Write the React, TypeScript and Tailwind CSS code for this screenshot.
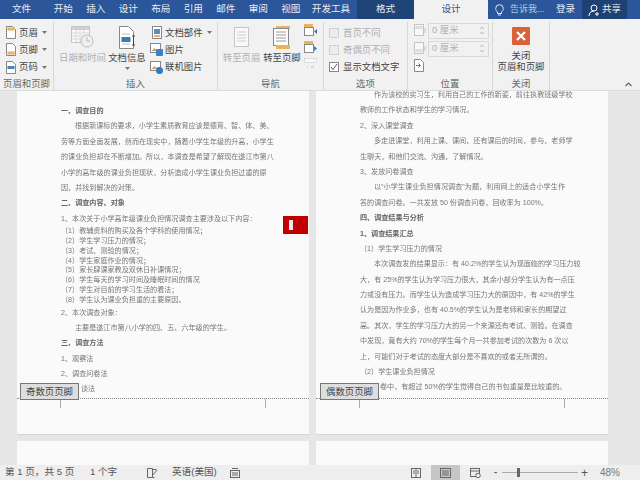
import React from "react";

const FONT = "font-['Liberation_Sans','Noto_Sans_CJK_SC',sans-serif]";

function Caret({ className = "" }: { className?: string }) {
  return <svg width="5" height="3" viewBox="0 0 5 3" className={className}><path d="M0 0h5L2.5 3z" fill="#777" /></svg>;
}

function DocIcon({ band, bandY = 8 }: { band: string; bandY?: number }) {
  return (
    <svg width="10" height="13" viewBox="0 0 10 13">
      <path d="M.5.5h6l3 3v9h-9z" fill="#fff" stroke="#888" />
      <rect x="1.5" y={bandY} width="7" height="3" fill={band} />
    </svg>
  );
}

function SmallPic({ color }: { color: string }) {
  return (
    <svg width="13" height="13" viewBox="0 0 13 13">
      <rect x=".5" y=".5" width="10" height="9" fill="#fff" stroke="#888" />
      <path d="M1.500 8l3-3 2 2 1-1 2 2z" fill="#c9a36a" />
      <rect x="6" y="6" width="7" height="7" rx={color === "#2b7cc4" ? 3.5 : 1} fill={color} />
    </svg>
  );
}

function Group({ w, label, children, last = false, className = "" }: { w: string; label: string; children: React.ReactNode; last?: boolean; className?: string }) {
  return (
    <div className={`${w} h-[69px] mt-[3px] shrink-0 flex flex-col ${last ? "" : "border-r border-[#d8d8d8]"}`}>
      <div className={`flex-1 min-h-0 flex ${className}`}>{children}</div>
      <div className="h-[15px] leading-[15px] text-center text-[9.4px] text-[#666]">{label}</div>
    </div>
  );
}

function BigBtn({ text, w, dim = false, icon, caret = false }: { text: string; w: string; dim?: boolean; icon: React.ReactNode; caret?: boolean }) {
  return (
    <div className={`${w} flex flex-col items-center pt-[3px] ${dim ? "text-[#b0b0b0]" : "text-[#444]"}`}>
      <div className="h-[24px] flex items-center">{icon}</div>
      <div className="text-[9.4px] leading-[11px] whitespace-nowrap mt-[3px]">{text}</div>
      {caret && <Caret className="mt-[4px]" />}
    </div>
  );
}

function Row({ icon, text, caret = false }: { icon: React.ReactNode; text: string; caret?: boolean }) {
  return (
    <div className="h-[17.5px] flex items-center text-[9.4px] whitespace-nowrap text-[#444]">
      <div className="w-[13px] flex justify-center shrink-0">{icon}</div>
      <span className="ml-[2px]">{text}</span>
      {caret && <Caret className="ml-[4px]" />}
    </div>
  );
}

function Check({ text, checked = false }: { text: string; checked?: boolean }) {
  return (
    <div className={`h-[17.5px] flex items-center text-[9.4px] whitespace-nowrap ${checked ? "text-[#444]" : "text-[#b0b0b0]"}`}>
      <div className={`w-[10px] h-[10px] border ${checked ? "border-[#888] bg-white" : "border-[#d0d0d0] bg-[#ececec]"} flex items-center justify-center`}>
        {checked && <svg width="8" height="8" viewBox="0 0 8 8"><path d="M1 4l2 2.5L7 1" fill="none" stroke="#555" /></svg>}
      </div>
      <span className="ml-[4px]">{text}</span>
    </div>
  );
}

function Spin({ top = false }: { top?: boolean }) {
  return (
    <div className="h-[17px] flex items-center">
      <svg width="14" height="13" viewBox="0 0 14 13" className="opacity-50 shrink-0">
        <rect x=".5" y=".5" width="9" height="11" fill="#fff" stroke="#999" />
        <rect x="1.5" y={top ? 2 : 7} width="7" height="3" fill="#ccc" />
        <path d="M11 4v5" stroke="#999" />
      </svg>
      <div className="w-[61px] h-[16px] border border-[#d8d8d8] flex items-center justify-between pl-[3px] pr-[4px] text-[9.4px] text-[#b0b0b0]">
        <span>0 厘米</span>
        <svg width="4" height="9" viewBox="0 0 4 9"><path d="M0 3l2-2 2 2M0 6l2 2 2-2" fill="none" stroke="#bbb" /></svg>
      </div>
    </div>
  );
}

const BAND = "#e9b35f";

function Ribbon() {
  return (
    <div className="h-[72px] bg-[#f1f1f1] flex items-start relative border-b border-[#dcdcdc]">
      <Group w="w-[54px]" label="页眉和页脚" className="flex-col pl-[4px] pt-[2px]">
        <Row icon={<DocIcon band={BAND} bandY={1.5} />} text="页眉" caret />
        <Row icon={<DocIcon band={BAND} bandY={8.5} />} text="页脚" caret />
        <Row icon={<DocIcon band="#4a7fc1" bandY={5} />} text="页码" caret />
      </Group>
      <Group w="w-[164px]" label="插入" className="pl-[5px]">
        <BigBtn
          w="w-[47px]"
          text="日期和时间"
          dim
          icon={
            <svg width="23" height="22" viewBox="0 0 23 22" className="opacity-60">
              <rect x=".5" y=".5" width="18" height="16" fill="#fff" stroke="#aaa" />
              <rect x="1" y="1" width="17" height="3" fill="#bbb" />
              <path d="M1 7h17M1 10h17M1 13h17M5 4v12M9 4v12M13 4v12" stroke="#ccc" />
              <circle cx="16" cy="15" r="6" fill="#eee" stroke="#999" />
              <path d="M16 11v4h3" fill="none" stroke="#999" />
            </svg>
          }
        />
        <div className="w-[2px]" />
        <BigBtn
          w="w-[38px]"
          text="文档信息"
          caret
          icon={
            <svg width="17" height="23" viewBox="0 0 17 23">
              <path d="M.5.5h9l5 5v17H.5z" fill="#fff" stroke="#888" />
              <rect x="2.500" y="11" width="9" height="5" fill="#3f76b8" />
              <path d="M3 8h8M3 18h8" stroke="#bbb" />
              <path d="M14.500 10v9M13 10h3M13 19h3" stroke="#444" fill="none" />
            </svg>
          }
        />
        <div className="flex flex-col pl-[4px] pt-[2px]">
          <Row icon={<svg width="10" height="13" viewBox="0 0 10 13"><rect x=".5" y=".5" width="9" height="12" fill="#fff" stroke="#888" /><rect x="2" y="3" width="6" height="5" fill="#5b8cc4" /><rect x="2" y="9" width="6" height="2" fill={BAND} /></svg>} text="文档部件" caret />
          <Row icon={<SmallPic color="#3f7fc4" />} text="图片" />
          <Row icon={<SmallPic color="#2b7cc4" />} text="联机图片" />
        </div>
      </Group>
      <Group w="w-[106px]" label="导航" className="pl-[5px]">
        <BigBtn
          w="w-[37px]"
          text="转至页眉"
          dim
          icon={
            <svg width="15" height="20" viewBox="0 0 15 20" className="opacity-60">
              <rect x=".5" y=".5" width="14" height="19" fill="#fff" stroke="#aaa" />
              <path d="M3 5h9M3 8h9M3 11h9M3 14h9" stroke="#bbb" />
            </svg>
          }
        />
        <div className="w-[2px]" />
        <BigBtn
          w="w-[40px]"
          text="转至页脚"
          icon={
            <svg width="18" height="23" viewBox="0 0 18 23">
              <rect x="3" y="0" width="14" height="3" fill={BAND} />
              <rect x=".5" y="2.500" width="15" height="17" fill="#fff" stroke="#888" />
              <path d="M3 6h10M3 9h10M3 12h10M3 15h10" stroke="#999" />
              <rect x="3" y="19" width="14" height="4" fill={BAND} />
            </svg>
          }
        />
        <div className="flex flex-col pl-[2px] pt-[2px] gap-[5px]">
          <svg width="13" height="12" viewBox="0 0 13 12"><rect x=".5" y="3.500" width="9" height="8" fill="#fff" stroke="#888" /><rect x="0" y="0" width="9" height="3" fill={BAND} /><path d="M13 5v5l-3-2.500z" fill="#3f76b8" /></svg>
          <svg width="13" height="12" viewBox="0 0 13 12"><rect x=".5" y="3.500" width="9" height="8" fill="#fff" stroke="#888" /><rect x="0" y="0" width="9" height="3" fill={BAND} /><path d="M10 5v5l3-2.500z" fill="#3f76b8" /></svg>
          <svg width="13" height="12" viewBox="0 0 13 12" className="opacity-50"><rect x=".5" y=".5" width="12" height="4" fill="#fff" stroke="#aaa" strokeDasharray="2 1" /><path d="M3 9h1M7 9h3" stroke="#888" /></svg>
        </div>
      </Group>
      <Group w="w-[84px]" label="选项" className="flex-col pl-[5px] pt-[2px]">
        <Check text="首页不同" />
        <Check text="奇偶页不同" />
        <Check text="显示文档文字" checked />
      </Group>
      <Group w="w-[85px]" label="位置" className="flex-col pl-[6px]">
        <Spin top />
        <div className="h-[1px]" />
        <Spin />
        <div className="mt-[2px]">
          <svg width="10" height="13" viewBox="0 0 10 13"><path d="M.5.5h6l3 3v9h-9z" fill="#fff" stroke="#888" /><path d="M2 6.500h4M4.500 4.500l2 2-2 2" stroke="#3f76b8" fill="none" /></svg>
        </div>
      </Group>
      <Group w="w-[57px]" label="关闭" className="flex-col items-center pt-[5px]">
        <div className="w-[18px] h-[18px] bg-[#d9623a] rounded-[1px] flex items-center justify-center">
          <svg width="10" height="10" viewBox="0 0 10 10"><path d="M1 1l8 8M9 1L1 9" stroke="#fff" strokeWidth="2.2" /></svg>
        </div>
        <div className="text-[9.4px] leading-[11px] text-[#444] text-center mt-[5px] whitespace-nowrap">关闭<br />页眉和页脚</div>
      </Group>
      <div className="absolute right-[8px] bottom-[3px]">
        <svg width="7" height="5" viewBox="0 0 7 5"><path d="M.5 4l3-3 3 3" fill="none" stroke="#666" strokeWidth="1.2" /></svg>
      </div>
    </div>
  );
}

function Tabs() {
  const tabs = ["开始", "插入", "设计", "布局", "引用", "邮件", "审阅", "视图"];
  return (
    <div className="h-[19px] bg-[#2b579a] flex items-stretch text-[9.6px] text-[#e8edf5] whitespace-nowrap">
      <div className="w-[43px] mr-[4px] flex items-center justify-center">文件</div>
      {tabs.map((t) => (
        <div key={t} className="w-[32.5px] flex items-center justify-center">{t}</div>
      ))}
      <div className="w-[48px] mr-[2px] flex items-center justify-center">开发工具</div>
      <div className="w-[57px] bg-[#1f4478] flex items-center justify-center">格式</div>
      <div className="w-[74px] bg-[#f1f1f1] text-[#2b579a] flex items-center justify-center">设计</div>
      <div className="w-[68px] flex items-center pl-[7px]">
        <svg width="9" height="12" viewBox="0 0 9 12"><path d="M2.500 8C1.500 7 .7 6 .7 4.500a3.800 3.800 0 0 1 7.600 0C8.300 6 7.500 7 6.500 8v1.500h-4zM3 11h3" fill="none" stroke="#dfe6f0" /></svg>
        <span className="ml-[6px] text-[#b7c7de] text-[9px]">告诉我...</span>
      </div>
      <div className="w-[26px] flex items-center">登录</div>
      <div className="w-[45px] bg-[#1e4173] flex items-center pl-[6px]">
        <svg width="12" height="12" viewBox="0 0 12 12"><circle cx="6" cy="4" r="3" fill="none" stroke="#fff" /><path d="M1 12c0-3 2-5 5-5M9 8v4M7 10h4" fill="none" stroke="#fff" /></svg>
        <span className="ml-[2px]">共享</span>
      </div>
    </div>
  );
}

type K = "h" | "p" | "i" | "f" | "n" | "l" | "a";
type L = [string, K];

const left: L[] = [
  ["一、调查目的", "h"],
  ["根据新课标的要求，小学生素质教育应该是德育、智、体、美、", "i"],
  ["劳等方面全面发展，然而在现实中，随着小学生年级的升高，小学生", "f"],
  ["的课业负担却在不断增加。所以，本调查是希望了解现在遂江市第八", "f"],
  ["小学的高年级的课业负担现状，分析造成小学生课业负担过重的原", "f"],
  ["因，并找到解决的对策。", "p"],
  ["二、调查内容、对象", "h"],
  ["1、本次关于小学高年级课业负担情况调查主要涉及以下内容：", "p"],
  ["（1）教辅资料的购买及各个学科的使用情况；", "l"],
  ["（2）学生学习压力的情况；", "l"],
  ["（3）考试、测验的情况；", "l"],
  ["（4）学生家庭作业的情况；", "l"],
  ["（5）家长肆课家教及双休日补课情况；", "l"],
  ["（6）学生每天的学习时间及睡眠时间的情况", "l"],
  ["（7）学生对目前的学习生活的看法；", "l"],
  ["（8）学生认为课业负担重的主要原因。", "l"],
  ["2、本次调查对象：", "p"],
  ["主要是遂江市第八小学的四、五、六年级的学生。", "n"],
  ["三、调查方法", "h"],
  ["1、观察法", "p"],
  ["2、调查问卷法", "p"],
  ["谈法", "a"],
];

const right: L[] = [
  ["作为该校的实习生，利用自己的工作的新姿，前往执教班级学校", "i"],
  ["教师的工作状态和学生的学习情况。", "p"],
  ["2、深入课堂调查", "p"],
  ["多走进课堂，利用上课、课间、还有课后的时间，参与、老师学", "i"],
  ["生聊天，和他们交流、沟通，了解情况。", "p"],
  ["3、发放问卷调查", "p"],
  ["以“小学生课业负担情况调查”为题，利用网上的适合小学生作", "i"],
  ["答的调查问卷。一共发放 50 份调查问卷，回收率为 100%。", "p"],
  ["四、调查结果与分析", "h"],
  ["1、调查结果汇总", "h"],
  ["（1）学生学习压力的情况", "p"],
  ["本次调查发的结果显示：有 40.2%的学生认为现面临的学习压力较", "i"],
  ["大，有 25%的学生认为学习压力很大，其余小部分学生认为有一点压", "f"],
  ["力或没有压力。而学生认为造成学习压力大的原因中，有 42%的学生", "f"],
  ["认为是因为作业多，也有 40.5%的学生认为是老师和家长的期望过", "f"],
  ["高。其次，学生的学习压力大的另一个来源还有考试、测验。在调查", "f"],
  ["中发现，竟有大约 70%的学生每个月一共参加考试的次数为 6 次以", "f"],
  ["上，可能们对于考试的态度大部分是不喜欢的或者无所谓的。", "p"],
  ["（2）学生课业负担情况", "p"],
  ["卷中，有超过 50%的学生觉得自己的书包重量是比较重的。", "a"],
];

const kinds: Record<K, string> = {
  h: "h-[15.4px] leading-[15.4px] font-bold text-[#666]",
  p: "h-[15.4px] leading-[15.4px]",
  i: "h-[15.4px] leading-[15.4px] pl-[14px] text-justify [text-align-last:justify]",
  f: "h-[15.4px] leading-[15.4px] text-justify [text-align-last:justify]",
  n: "h-[15.4px] leading-[15.4px] pl-[14px]",
  l: "h-[9.8px] leading-[9.8px]",
  a: "h-[15.4px] leading-[15.4px] pl-[20px]",
};

function Mark() {
  return <div className="w-[1px] h-[9px] bg-[#aaa]" />;
}

function Page({ lines, label, labelClass, bodyClass }: { lines: L[]; label: string; labelClass: string; bodyClass: string }) {
  return (
    <div className="w-[292px] h-[344px] bg-[#fafafa] border-b border-[#d4d4d4] relative shrink-0">
      <div className="h-[308px] overflow-hidden border-b border-dotted border-[#888]">
        <div className={`w-[205px] text-[7.1px] text-[#777] whitespace-nowrap blur-[0.3px] ${bodyClass}`}>
          {lines.map((l, i) => (
            <div key={i} className={kinds[l[1]]}>{l[0]}</div>
          ))}
        </div>
      </div>
      <div className="flex justify-between w-[206px] ml-[43px]">
        <Mark />
        <Mark />
      </div>
      <div className={`absolute top-[292px] h-[17px] border border-[#777] bg-[#dedede] text-[#444] text-[9.4px] leading-[15px] px-[5px] whitespace-nowrap ${labelClass}`}>{label}</div>
    </div>
  );
}

function Status() {
  return (
    <div className="h-[15px] bg-[#eeeeee] flex items-center text-[9.6px] text-[#555] whitespace-nowrap">
      <span className="ml-[5px] w-[85px]">第 1 页，共 5 页</span>
      <span className="w-[57px]">1 个字</span>
      <svg width="11" height="10" viewBox="0 0 11 10"><path d="M.5.5h5v9h-5zM5.500 1.500h4M5.500 9.500h2" fill="none" stroke="#666" /><path d="M6 7l4-5" stroke="#666" /></svg>
      <span className="ml-[14px] w-[58px]">英语(美国)</span>
      <svg width="10" height="10" viewBox="0 0 10 10"><rect x=".5" y="2.500" width="9" height="7" fill="none" stroke="#666" /><path d="M2 .5h6M2 5h6M2 7h6" stroke="#666" /></svg>
      <div className="ml-[171px] w-[20px] flex">
        <svg width="10" height="10" viewBox="0 0 10 10"><rect x=".5" y=".5" width="9" height="9" fill="none" stroke="#666" /><path d="M5 1v8M2 3h2M2 5h2M6 3h2M6 5h2" stroke="#666" /></svg>
      </div>
      <div className="w-[29px] h-[15px] bg-[#c6c6c6] flex items-center justify-center">
        <svg width="11" height="10" viewBox="0 0 11 10"><rect x=".5" y=".5" width="10" height="9" fill="none" stroke="#666" /><path d="M2 3h7M2 5h7M2 7h7" stroke="#666" /></svg>
      </div>
      <div className="w-[10px]" />
      <svg width="11" height="10" viewBox="0 0 11 10"><rect x=".5" y=".5" width="9" height="8" fill="none" stroke="#666" /><path d="M.5 3h9" stroke="#666" /><circle cx="8" cy="7.500" r="2.300" fill="#eee" stroke="#666" /></svg>
      <span className="ml-[13px] text-[#555] w-[8px] font-bold">-</span>
      <div className="w-[76px] h-[1px] bg-[#aaa] flex items-center pl-[15px]">
        <div className="w-[3px] h-[9px] bg-[#666] shrink-0" />
      </div>
      <span className="ml-[3px] w-[16px] text-[12px] text-[#555] leading-none">+</span>
      <span className="text-[10px] ml-[3px] text-[#777]">48%</span>
    </div>
  );
}

export default function App() {
  return (
    <div className={`w-[640px] h-[480px] overflow-hidden bg-[#e6e6e6] flex flex-col ${FONT}`}>
      <Tabs />
      <Ribbon />
      <div className="h-[374px] overflow-hidden pl-[17px] relative">
        <div className="flex gap-[7px]">
          <Page lines={left} label="奇数页页脚" labelClass="left-[3px]" bodyClass="ml-[44px] pt-[13px]" />
          <Page lines={right} label="偶数页页脚" labelClass="left-[4px]" bodyClass="ml-[44px] -mt-[3px]" />
        </div>
        <div className="flex gap-[7px] mt-[6px]">
          <div className="w-[292px] h-[24px] bg-[#fafafa]" />
          <div className="w-[292px] h-[24px] bg-[#fafafa]" />
        </div>
        <div className="absolute left-[283px] top-[125px] w-[25px] h-[18px] bg-[#c00000] flex items-center pl-[6px]">
          <div className="w-[4px] h-[10px] bg-[#e8e8e8]" />
        </div>
      </div>
      <Status />
    </div>
  );
}
